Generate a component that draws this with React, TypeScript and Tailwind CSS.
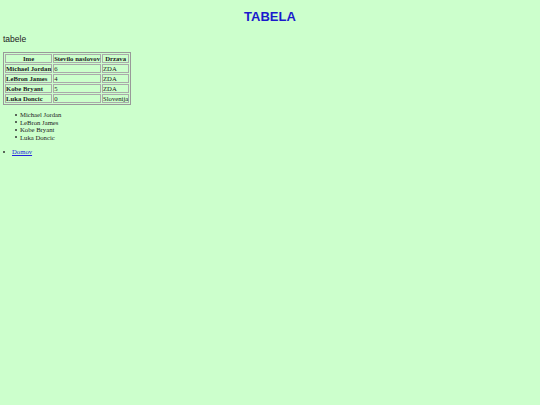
const players = [
  { name: "Michael Jordan", titles: "6", country: "ZDA" },
  { name: "LeBron James", titles: "4", country: "ZDA" },
  { name: "Kobe Bryant", titles: "5", country: "ZDA" },
  { name: "Luka Doncic", titles: "0", country: "Slovenija" },
];

function Bullet({ children }: { children: React.ReactNode }) {
  return (
    <li className="flex items-center">
      <span className="mr-[3px] h-[2px] w-[2px] rounded-full bg-[#333]" />
      {children}
    </li>
  );
}

export default function App() {
  return (
    <div className="min-h-[405px] w-full bg-[#ccffcc] px-[3px] pt-[9px] font-['Liberation_Serif',serif] text-[6.7px] leading-[7.5px] text-[#222]">
      <h1 className="text-center font-['Liberation_Sans',Arial,sans-serif] text-[13px] leading-[15px] font-bold text-[#1a1acc]">
        TABELA
      </h1>
      <h2 className="mt-[10px] font-['Liberation_Sans',Arial,sans-serif] text-[8.5px] leading-[10px] font-normal text-[#222]">
        tabele
      </h2>

      <table className="mt-[8px] border-separate border-spacing-[1px] border border-[#999] leading-[7px]">
        <thead>
          <tr>
            <th className="border border-[#aaa] p-0 text-center font-bold">Ime</th>
            <th className="border border-[#aaa] p-0 text-center font-bold">Stevilo naslovov</th>
            <th className="border border-[#aaa] p-0 text-center font-bold">Drzava</th>
          </tr>
        </thead>
        <tbody>
          {players.map((p) => (
            <tr key={p.name}>
              <td className="border border-[#aaa] p-0 font-bold">{p.name}</td>
              <td className="border border-[#aaa] p-0">{p.titles}</td>
              <td className="border border-[#aaa] p-0">{p.country}</td>
            </tr>
          ))}
        </tbody>
      </table>

      <ul className="mt-[6px] pl-[12px]">
        {players.map((p) => (
          <Bullet key={p.name}>{p.name}</Bullet>
        ))}
      </ul>

      <ul className="mt-[7px] pl-0">
        <li className="flex items-center">
          <span className="mr-[7px] h-[2px] w-[2px] rounded-full bg-[#333]" />
          <a href="#" className="text-[#2222dd] underline">
            Domov
          </a>
        </li>
      </ul>
    </div>
  );
}
